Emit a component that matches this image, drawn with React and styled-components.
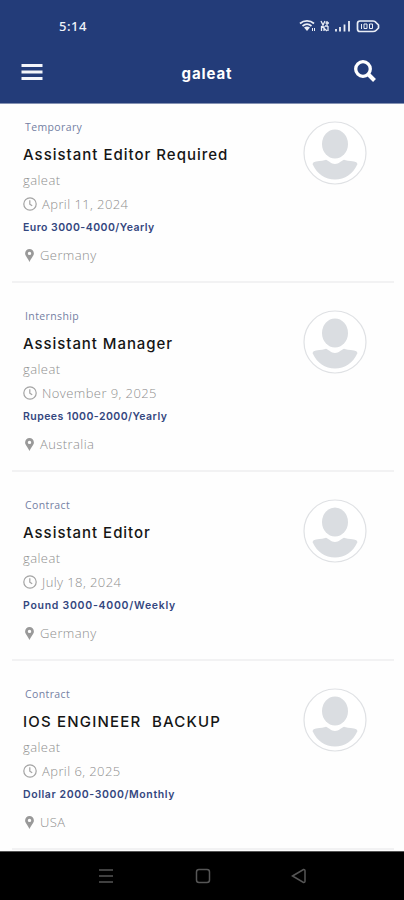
import React from "react";
import styled, { createGlobalStyle } from "styled-components";

const Global = createGlobalStyle`
  * { box-sizing: border-box; }
  body { margin: 0; background: #fff; font-family: "Open Sans", "Noto Sans", sans-serif; }
`;

const Screen = styled.div`
  display: flex;
  flex-direction: column;
  width: 404px;
  height: 900px;
  overflow: hidden;
  background: #fefefe;
`;

const Header = styled.header`
  flex: none;
  height: 104px;
  background: #233c79;
  border-bottom: 1px solid #8592b3;
  color: #fff;
`;

const StatusBar = styled.div`
  display: flex;
  align-items: center;
  justify-content: space-between;
  height: 51px;
  padding: 0 24px 0 59px;
`;

const Clock = styled.span`
  font: 500 13px/18px "Noto Sans", sans-serif;
  letter-spacing: 0.5px;
  color: #f0f3fa;
`;

const StatusIcons = styled.svg`
  display: block;
  width: 82px;
  height: 16px;
`;

const AppBar = styled.div`
  display: grid;
  grid-template-columns: 24px 1fr 24px;
  align-items: center;
  height: 42px;
  padding: 0 27px 0 20px;
`;

const AppTitle = styled.h1`
  margin: 3px 0 0 17px;
  text-align: center;
  font: 700 15px/20px Inter, sans-serif;
  letter-spacing: 0.9px;
`;

const BarIcon = styled.svg`
  display: block;
  width: 24px;
  height: 24px;
`;

const List = styled.main`
  flex: 1;
  min-height: 0;
  display: flex;
  flex-direction: column;
  gap: 10px;
  overflow: hidden;
`;

const Card = styled.article`
  flex: none;
  display: flex;
  justify-content: space-between;
  height: 179px;
  margin: 0 10px 0 12px;
  padding: 14px 27px 0 11px;
  border-bottom: 2px solid #f2f2f3;
`;

const Details = styled.div`
  display: flex;
  flex-direction: column;
`;

const JobType = styled.span`
  height: 22px;
  padding-left: 2px;
  font-size: 10.5px;
  letter-spacing: 0.38px;
  line-height: 18px;
  color: #7480a3;
`;

const JobTitle = styled.h2`
  margin: 0;
  font: 500 15px/30px Inter, sans-serif;
  letter-spacing: ${(p) => p.$tracking}px;
  white-space: pre;
  color: #151515;
  height: 28px;
`;

const Muted = styled.div`
  display: flex;
  align-items: center;
  gap: ${(p) => p.$gap || 0}px;
  height: 24px;
  padding-left: ${(p) => p.$inset || 0}px;
  font-size: 13px;
  font-weight: 300;
  letter-spacing: 0.42px;
  line-height: 24px;
  color: #8e8e8e;
`;

const Salary = styled.div`
  height: 27px;
  font: 600 10.5px/24px Inter, sans-serif;
  letter-spacing: ${(p) => p.$tracking}px;
  color: #34477f;
`;

const Avatar = styled.svg`
  flex: none;
  width: 64px;
  height: 64px;
  margin-top: 3px;
`;

const NavBar = styled.nav`
  flex: none;
  display: flex;
  align-items: center;
  justify-content: space-between;
  height: 49px;
  padding: 0 97px 0 98px;
  background: #000;
  border-top: 1px solid #555;
`;

const NavIcon = styled.svg`
  width: 16px;
  height: 16px;
  fill: none;
  stroke: #565656;
  stroke-width: 1.5;
`;

const ClockIcon = () => (
  <svg width="14" height="14" viewBox="0 0 14 14" fill="none" stroke="#a3a3a3" strokeWidth="1.2">
    <circle cx="7" cy="7" r="6.2" />
    <path d="M6.8 3.2V7.2L9.2 8.8" />
  </svg>
);

const PinIcon = () => (
  <svg width="9" height="13" viewBox="0 0 9 13">
    <path
      fill="#999"
      fillRule="evenodd"
      d="M4.5 0A4.4 4.4 0 0 0 .1 4.4C.1 7 2.5 8.3 4.5 13 6.5 8.3 8.9 7 8.9 4.4A4.4 4.4 0 0 0 4.5 0ZM4.5 2.7A1.7 1.7 0 1 1 4.5 6.1 1.7 1.7 0 0 1 4.5 2.7Z"
    />
  </svg>
);

const jobs = [
  { type: "Temporary", title: "Assistant Editor Required", date: "April 11, 2024", pay: "Euro 3000-4000/Yearly", place: "Germany", titleTracking: 1, payTracking: 0.46 },
  { type: "Internship", title: "Assistant Manager", date: "November 9, 2025", pay: "Rupees 1000-2000/Yearly", place: "Australia", titleTracking: 0.94, payTracking: 0.45 },
  { type: "Contract", title: "Assistant Editor", date: "July 18, 2024", pay: "Pound 3000-4000/Weekly", place: "Germany", titleTracking: 0.97, payTracking: 0.73 },
  { type: "Contract", title: "IOS ENGINEER  BACKUP", date: "April 6, 2025", pay: "Dollar 2000-3000/Monthly", place: "USA", titleTracking: 1.2, payTracking: 0.6 },
];

const JobCard = ({ job }) => (
  <Card>
    <Details>
      <JobType>{job.type}</JobType>
      <JobTitle $tracking={job.titleTracking}>{job.title}</JobTitle>
      <Muted>galeat</Muted>
      <Muted $gap={5}>
        <ClockIcon />
        {job.date}
      </Muted>
      <Salary $tracking={job.payTracking}>{job.pay}</Salary>
      <Muted $gap={6} $inset={2}>
        <PinIcon />
        {job.place}
      </Muted>
    </Details>
    <Avatar viewBox="0 0 64 64">
      <circle cx="32" cy="32" r="31" fill="#fff" stroke="#dfe1e4" strokeWidth="1.2" />
      <ellipse cx="32" cy="23" rx="13" ry="14.5" fill="#dadde1" />
      <path fill="#dadde1" d="M9.500 43Q10 40.800 13 40.500C18 40 21 39.800 23 38.800 26 40 28 43 32 43S38 40 41 38.800C43 39.800 46 40 51 40.500Q54 40.800 54.500 43C50 53 42 58.500 32 58.500S14 53 9.500 43Z" />
    </Avatar>
  </Card>
);

export default function App() {
  return (
    <Screen>
      <Global />
      <Header>
        <StatusBar>
          <Clock>5:14</Clock>
          <StatusIcons viewBox="0 0 82 16" fill="none" stroke="#e9edf6">
            <path d="M2 5.500C6 2 12 2 16 5.500M4.500 8C7.500 5.500 10.500 5.500 13.500 8" strokeWidth="1.700" />
            <path d="M6 9.500Q9 7.500 12 9.500L9 13Z" fill="#e9edf6" stroke="none" />
            <path d="M14.500 10V13M16.500 10V13" strokeWidth="1" />
            <path d="M23 3L25 7L27 3M29 3V7M27.500 5H31M23.500 8V13M26 8V13M23.500 8L29 13M30 8V13M27 8H30" strokeWidth="1.300" />
            <path d="M38 11V13.500M42 9V13.500M46.500 6.500V13.500M51 3V13.500" strokeWidth="1.800" />
            <path d="M62 3H75Q77 3 78 4.500L80.500 7V10L78 12.500Q77 13.500 75 13.500H62Q59.500 13.500 59.500 11V5.500Q59.500 3 62 3Z" strokeWidth="1.700" />
            <path d="M63.500 6V11M66 6H69V10.500H66ZM71.500 6H74.500V10.500H71.500Z" strokeWidth="1" />
          </StatusIcons>
        </StatusBar>
        <AppBar>
          <BarIcon viewBox="0 0 24 24" stroke="#f3f5fb" strokeWidth="3">
            <path d="M1.500 5.500H22.500M1.500 12H22.500M1.500 18.500H22.500" />
          </BarIcon>
          <AppTitle>galeat</AppTitle>
          <BarIcon viewBox="0 0 24 24" fill="none" stroke="#fff">
            <circle cx="10" cy="9" r="7.300" strokeWidth="3.300" />
            <path d="M15.500 14.500L21.500 20.500" strokeWidth="4" />
          </BarIcon>
        </AppBar>
      </Header>
      <List>
        {jobs.map((job) => (
          <JobCard key={job.title} job={job} />
        ))}
      </List>
      <NavBar>
        <NavIcon viewBox="0 0 16 16">
          <path d="M1 2H15M1 8H15M1 14H15" />
        </NavIcon>
        <NavIcon viewBox="0 0 16 16">
          <rect x="1.5" y="1.5" width="13" height="13" rx="2.5" />
        </NavIcon>
        <NavIcon viewBox="0 0 16 16">
          <path d="M1.500 8L12.500 1.500Q14 1.200 14 3V13Q14 14.800 12.500 14.500Z" />
        </NavIcon>
      </NavBar>
    </Screen>
  );
}
